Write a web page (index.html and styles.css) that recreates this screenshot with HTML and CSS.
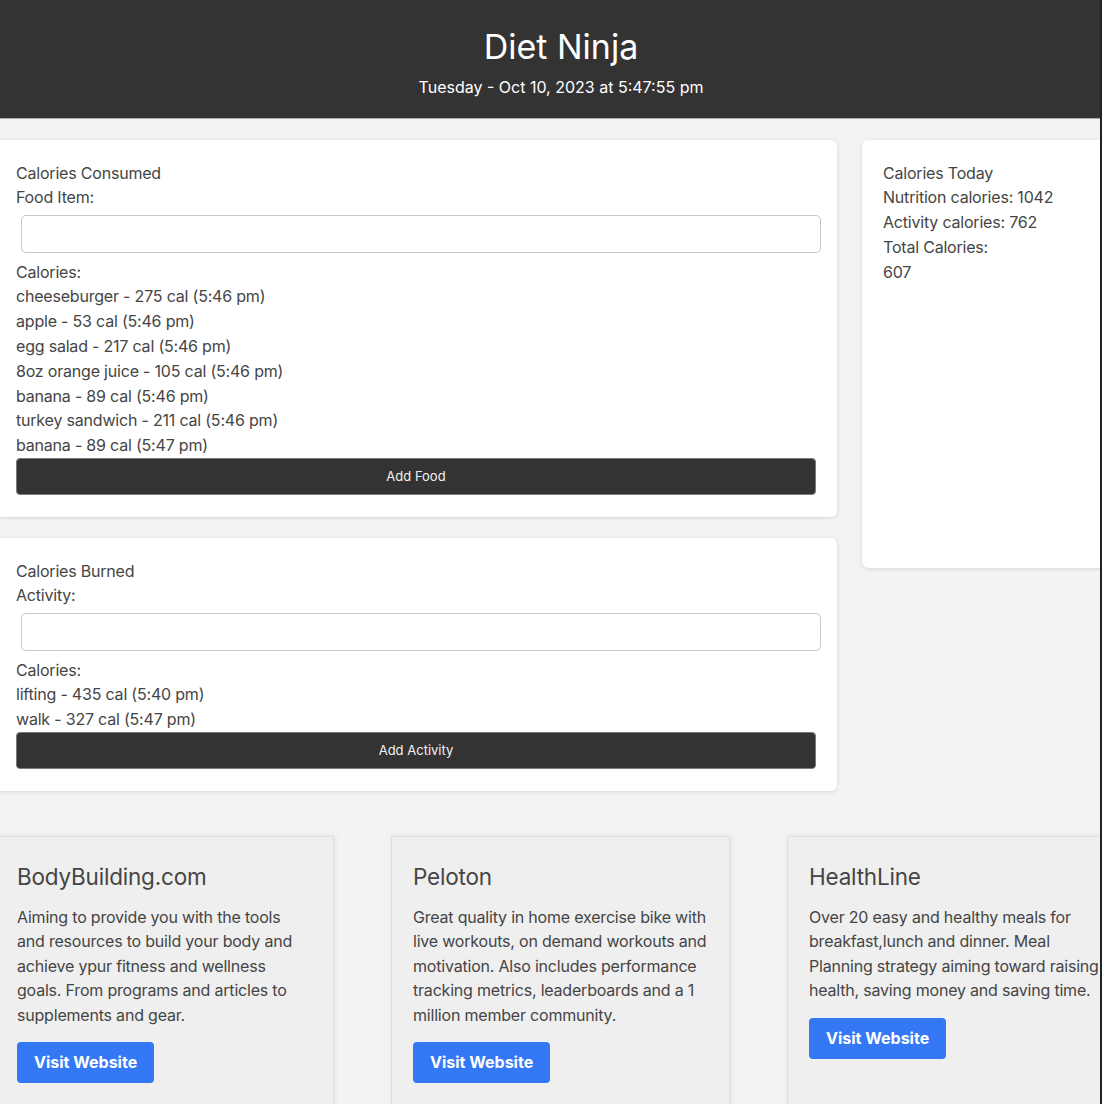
FILE: index.html
```html
<!DOCTYPE html>
<html lang="en">
<head>
<meta charset="utf-8">
<title>Diet Ninja</title>
<link rel="stylesheet" href="styles.css">
</head>
<body>
<div class="page">
  <div class="canvas">
    <header class="header">
      <h1 class="title">Diet Ninja</h1>
      <div class="subtitle">Tuesday - Oct 10, 2023 at 5:47:55 pm</div>
    </header>

    <main class="main">
      <div class="left-col">
        <section class="card">
          <div class="line">Calories Consumed</div>
          <div class="line">Food Item:</div>
          <input class="text-input" type="text">
          <div class="line cal-label">Calories:</div>
          <div class="line">cheeseburger - 275 cal (5:46 pm)</div>
          <div class="line">apple - 53 cal (5:46 pm)</div>
          <div class="line">egg salad - 217 cal (5:46 pm)</div>
          <div class="line">8oz orange juice - 105 cal (5:46 pm)</div>
          <div class="line">banana - 89 cal (5:46 pm)</div>
          <div class="line">turkey sandwich - 211 cal (5:46 pm)</div>
          <div class="line">banana - 89 cal (5:47 pm)</div>
          <button class="dark-btn">Add Food</button>
        </section>

        <section class="card">
          <div class="line">Calories Burned</div>
          <div class="line">Activity:</div>
          <input class="text-input" type="text">
          <div class="line cal-label">Calories:</div>
          <div class="line">lifting - 435 cal (5:40 pm)</div>
          <div class="line">walk - 327 cal (5:47 pm)</div>
          <button class="dark-btn">Add Activity</button>
        </section>
      </div>

      <aside class="card summary">
        <div class="line">Calories Today</div>
        <div class="line">Nutrition calories: 1042</div>
        <div class="line">Activity calories: 762</div>
        <div class="line">Total Calories:</div>
        <div class="line">607</div>
      </aside>
    </main>

    <section class="links">
      <article class="link-card">
        <h2 class="link-title">BodyBuilding.com</h2>
        <p class="link-text">Aiming to provide you with the tools and resources to build your body and achieve ypur fitness and wellness goals. From programs and articles to supplements and gear.</p>
        <a class="visit-btn" href="#">Visit Website</a>
      </article>
      <article class="link-card">
        <h2 class="link-title">Peloton</h2>
        <p class="link-text">Great quality in home exercise bike with live workouts, on demand workouts and motivation. Also includes performance tracking metrics, leaderboards and a 1 million member community.</p>
        <a class="visit-btn" href="#">Visit Website</a>
      </article>
      <article class="link-card">
        <h2 class="link-title">HealthLine</h2>
        <p class="link-text">Over 20 easy and healthy meals for breakfast,lunch and dinner. Meal Planning strategy aiming toward raising health, saving money and saving time.</p>
        <a class="visit-btn" href="#">Visit Website</a>
      </article>
    </section>
  </div>
</div>
</body>
</html>
```

FILE: styles.css
```css
html, body {
  margin: 0;
  padding: 0;
  background: #f3f3f3;
  overflow: hidden;
}

body {
  font-family: Inter, "Noto Sans", "Liberation Sans", sans-serif;
  color: #454545;
  font-size: 16px;
  letter-spacing: -0.2px;
}

.page {
  width: 1100px;
  height: 1104px;
  overflow: hidden;
  border-right: 2px solid #232327;
  background: #f3f3f3;
}

.canvas {
  width: 1132px;
  margin-left: -5px;
}

.header {
  background: #333333;
  color: #fff;
  text-align: center;
  padding: 25px 0 19px;
  border-bottom: 1px solid #a9a9a9;
}

.title {
  margin: 0;
  font-size: 34px;
  font-weight: 400;
  line-height: 44px;
  letter-spacing: 0;
}

.subtitle {
  margin-top: 6px;
  font-size: 16px;
  line-height: 24px;
  letter-spacing: 0;
}

.main {
  display: flex;
  gap: 25px;
  align-items: flex-start;
  padding-top: 21px;
}

.left-col {
  width: 842px;
  flex: none;
  display: flex;
  flex-direction: column;
  gap: 21px;
}

.card {
  background: #fff;
  border-radius: 6px;
  box-shadow: 0 1px 4px rgba(0, 0, 0, 0.12);
  padding: 20.6px 21px 22px;
  box-sizing: border-box;
}

.summary {
  width: 320px;
  flex: none;
  height: 428px;
}

.line {
  line-height: 24.8px;
  font-size: 16px;
}

.text-input {
  display: block;
  box-sizing: border-box;
  width: 800px;
  height: 38px;
  margin: 4.8px 0 0 5px;
  border: 1px solid #c8c8c8;
  border-radius: 5px;
  background: #fff;
  font: inherit;
}

.cal-label {
  margin-top: 6.6px;
}

.dark-btn {
  display: block;
  width: 100%;
  height: 37px;
  background: #333333;
  color: #f2f2f2;
  border: 1px solid #7a7a7a;
  border-radius: 4px;
  font-family: Inter, "Noto Sans", "Liberation Sans", sans-serif;
  font-size: 13px;
  letter-spacing: 0;
  cursor: pointer;
}

.links {
  display: flex;
  gap: 57px;
  margin-top: 45px;
}

.link-card {
  width: 339px;
  flex: none;
  box-sizing: border-box;
  min-height: 300px;
  background: #efefef;
  border: 1px solid #dedede;
  box-shadow: 1px 0 5px rgba(0, 0, 0, 0.08);
  padding: 21px 21px 22px;
}

.link-title {
  margin: 4px 0 0;
  font-size: 22.5px;
  font-weight: 400;
  line-height: 29px;
  color: #454545;
}

.link-text {
  margin: 14px 0 0;
  font-size: 16px;
  line-height: 24.5px;
  color: #454545;
}

.visit-btn {
  display: inline-block;
  margin-top: 15px;
  background: #3578f6;
  color: #fff;
  text-decoration: none;
  font-weight: 700;
  font-size: 16px;
  line-height: 21px;
  padding: 10px 17px;
  border-radius: 4px;
  letter-spacing: 0;
}
```
